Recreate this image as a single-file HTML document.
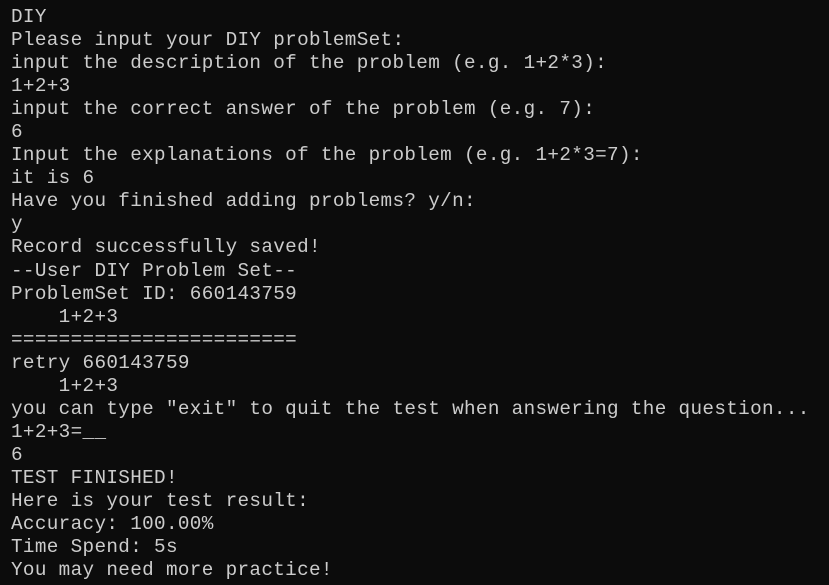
<!DOCTYPE html>
<html><head><meta charset="utf-8"><style>
html,body{margin:0;padding:0;background:#0c0c0c;width:829px;height:585px;overflow:hidden}
pre{margin:0;padding:6px 0 0 11px;font-family:"Liberation Mono",monospace;font-size:19.3px;letter-spacing:0.35px;line-height:23.04px;color:#cccccc;white-space:pre}
</style></head><body><pre>DIY
Please input your DIY problemSet:
input the description of the problem (e.g. 1+2*3):
1+2+3
input the correct answer of the problem (e.g. 7):
6
Input the explanations of the problem (e.g. 1+2*3=7):
it is 6
Have you finished adding problems? y/n:
y
Record successfully saved!
--User DIY Problem Set--
ProblemSet ID: 660143759
    1+2+3
========================
retry 660143759
    1+2+3
you can type "exit" to quit the test when answering the question...
1+2+3=__
6
TEST FINISHED!
Here is your test result:
Accuracy: 100.00%
Time Spend: 5s
You may need more practice!</pre></body></html>
